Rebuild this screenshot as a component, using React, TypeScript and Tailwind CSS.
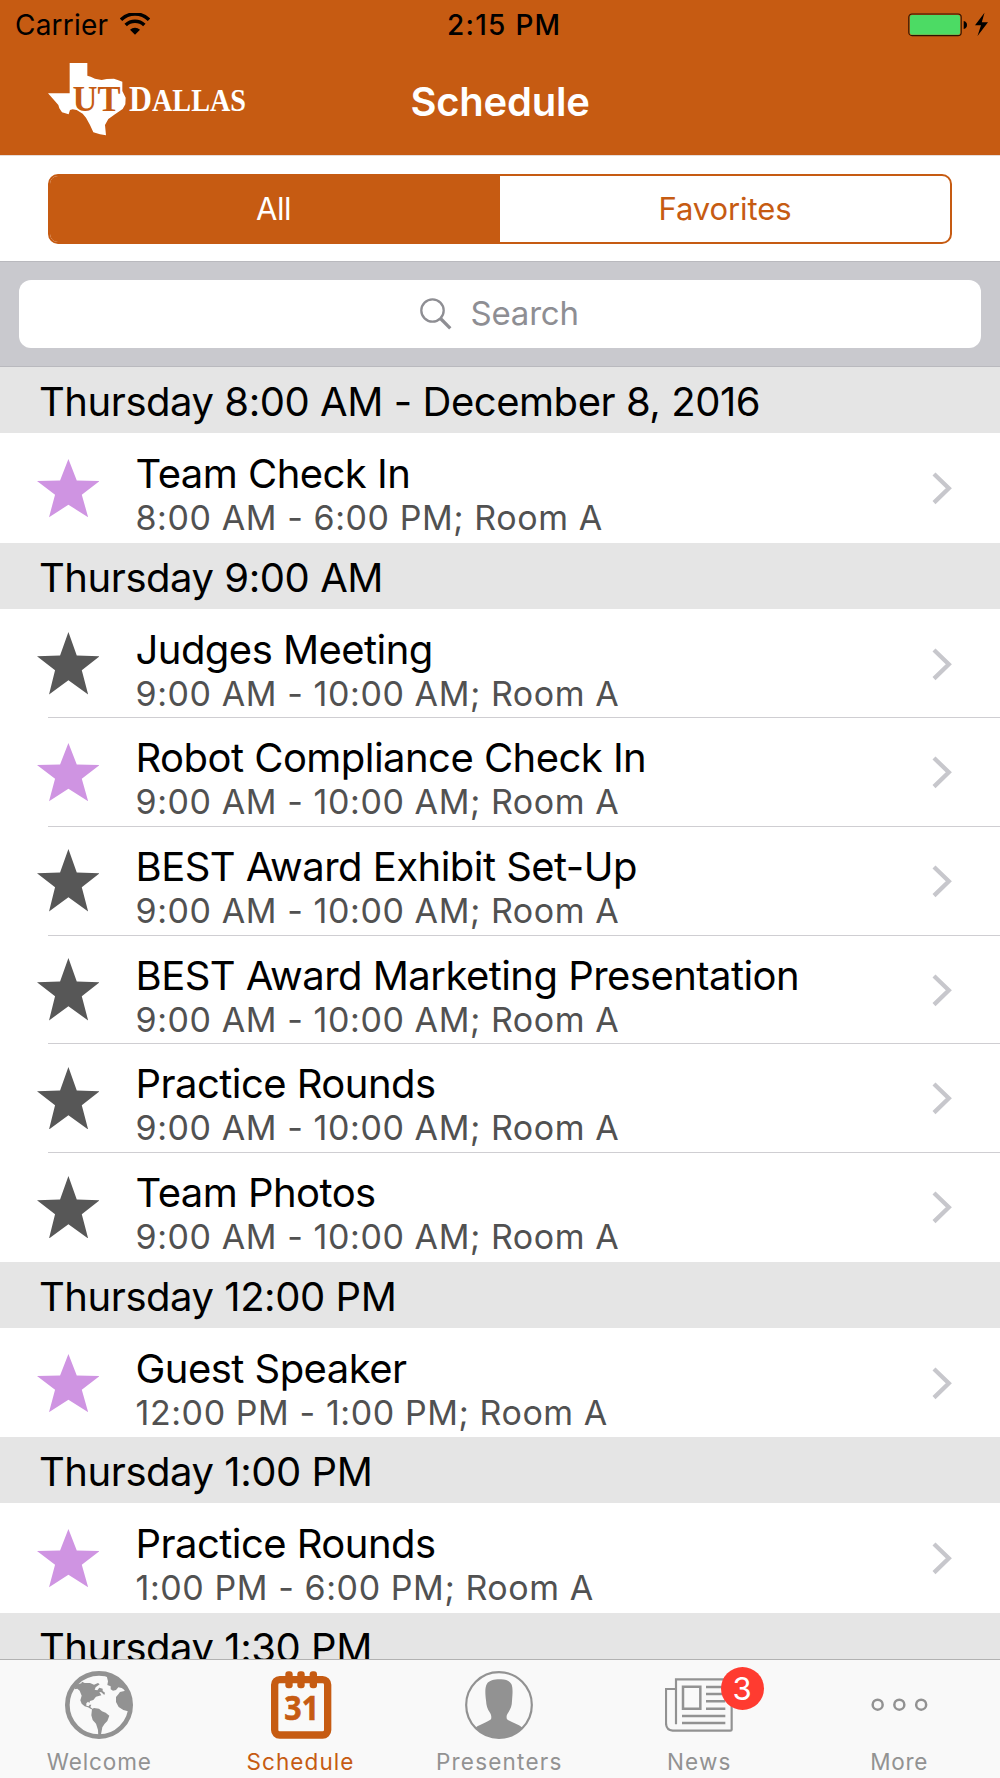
import React from "react";

type Entry = { title: string; detail: string; favorite?: boolean };
type Section = { heading: string; entries: Entry[] };

const schedule: Section[] = [
  {
    heading: "Thursday 8:00 AM - December 8, 2016",
    entries: [{ title: "Team Check In", detail: "8:00 AM - 6:00 PM; Room A", favorite: true }],
  },
  {
    heading: "Thursday 9:00 AM",
    entries: [
      { title: "Judges Meeting", detail: "9:00 AM - 10:00 AM; Room A" },
      { title: "Robot Compliance Check In", detail: "9:00 AM - 10:00 AM; Room A", favorite: true },
      { title: "BEST Award Exhibit Set-Up", detail: "9:00 AM - 10:00 AM; Room A" },
      { title: "BEST Award Marketing Presentation", detail: "9:00 AM - 10:00 AM; Room A" },
      { title: "Practice Rounds", detail: "9:00 AM - 10:00 AM; Room A" },
      { title: "Team Photos", detail: "9:00 AM - 10:00 AM; Room A" },
    ],
  },
  {
    heading: "Thursday 12:00 PM",
    entries: [{ title: "Guest Speaker", detail: "12:00 PM - 1:00 PM; Room A", favorite: true }],
  },
  {
    heading: "Thursday 1:00 PM",
    entries: [{ title: "Practice Rounds", detail: "1:00 PM - 6:00 PM; Room A", favorite: true }],
  },
  { heading: "Thursday 1:30 PM", entries: [] },
];

function WifiIcon() {
  return (
    <svg className="mt-[13px] ml-[12px] h-[22px] w-[30px]" viewBox="0 0 90 66" fill="none" stroke="#000">
      <path d="M3 20 A60 60 0 0 1 87 20" strokeWidth="10.500" />
      <path d="M17 36 A40 40 0 0 1 73 36" strokeWidth="10.500" />
      <path d="M45 65 L30 50 A22 22 0 0 1 60 50 Z" fill="#000" stroke="none" />
    </svg>
  );
}

function Logo() {
  return (
    <svg className="mt-[62px] ml-[48px] h-[74px] w-[204px]" viewBox="48 62 204 74">
      <g transform="translate(40 55) scale(.33333)">
        <path
          fill="#fff"
          d="M89 24H142V62L152 65L165 71L185 75L200 72L222 71L235 76L247 80V108L257 128L256 148L248 162L225 178L205 192L195 210L198 241L180 238L160 232L150 210L138 188L128 176L110 165L98 163L90 165L86 178L66 172L58 160L55 150L40 133L24 115H89Z"
        />
      </g>
      <g fontFamily="'Liberation Serif', serif" fontWeight="700">
        <text
          x="72.500"
          y="110.500"
          fontSize="35.500"
          textLength="48"
          lengthAdjust="spacingAndGlyphs"
          fill="#c65b12"
          stroke="#fff"
          strokeWidth="2"
          paintOrder="stroke"
        >
          UT
        </text>
        <text x="129" y="110.500" fontSize="36" textLength="23" lengthAdjust="spacingAndGlyphs" fill="#fff">
          D
        </text>
        <text x="152" y="110.500" fontSize="32" textLength="94" lengthAdjust="spacingAndGlyphs" fill="#fff">
          ALLAS
        </text>
      </g>
    </svg>
  );
}

function Battery() {
  return (
    <svg className="absolute top-[12px] right-[10px] h-[26px] w-[82px]" viewBox="0 0 82 26">
      <rect x=".8" y="2" width="52.4" height="21.6" rx="3.2" fill="#c65b12" stroke="#2c1202" strokeWidth="1.1" />
      <rect x="1.9" y="3.1" width="50.2" height="19.6" rx="2" fill="#4cdb64" />
      <path d="M55.7 9C58 9.4 59 11 59 13S58 16.600 55.7 17Z" fill="#000" />
      <path d="M76.500 .8L67 13.200H73L69.500 24L80 10.200H73.800Z" fill="#000" />
    </svg>
  );
}

function Star({ favorite }: { favorite?: boolean }) {
  return favorite ? (
    <svg
      className="mt-[26px] ml-[36.500px] h-[58.500px] w-[62.500px] shrink-0 blur-[0.7px]"
      viewBox="0 0 187 175"
      preserveAspectRatio="none"
    >
      <path fill="#cf94e2" d="M94 0L119 64L187 66L134 107L153 174L94 137L36 174L54 107L0 66L69 64Z" />
    </svg>
  ) : (
    <svg
      className="mt-[23.500px] ml-[36.500px] h-[62.500px] w-[62.500px] shrink-0"
      viewBox="0 0 187 188"
      preserveAspectRatio="none"
    >
      <path fill="#575757" d="M94 0L119 71L187 73L134 115L153 188L94 145L36 188L54 115L0 73L69 71Z" />
    </svg>
  );
}

function Chevron() {
  return (
    <svg className="mt-[39px] mr-[48px] ml-auto h-[33px] w-[20px] shrink-0" viewBox="0 0 20 33" fill="none">
      <path d="M2 2L16.800 16.300L2 30.600" stroke="#c7c7cc" strokeWidth="4.300" />
    </svg>
  );
}

function Row({ entry, last }: { entry: Entry; last: boolean }) {
  return (
    <div className={last ? "relative flex h-[109.600px]" : "relative flex h-[108.700px]"}>
      <Star favorite={entry.favorite} />
      <div className="ml-[36.500px] pt-[17px] whitespace-nowrap">
        <div className="text-[40px] leading-[48px] tracking-[-0.540px] text-black">{entry.title}</div>
        <div className="text-[34px] leading-[40px] tracking-[0.580px] text-[#515151]">{entry.detail}</div>
      </div>
      <Chevron />
      {!last && <div className="absolute right-0 -bottom-px left-[48px] h-px bg-[#cfced2]" />}
    </div>
  );
}

function GlobeIcon() {
  return (
    <svg className="h-[68px] w-[68px]" viewBox="33 35 204 204">
      <circle cx="135" cy="137" r="95" fill="none" stroke="#929292" strokeWidth="14" />
      <g fill="#929292">
        <path d="M62 90L66 76L82 72L84 67L92 71L108 71L120 76L132 71L137 75L125 84L122 91L130 93L136 85L146 88V95L153 100L151 107L142 99L136 98L142 108L126 112L118 122L108 125L106 131L102 127L97 132V139L104 141L107 136H112L109 143L116 149L112 150L102 144L92 141L83 133L79 123L83 109L77 94L70 88Z" />
        <path d="M114 149L120 146L135 148L144 156L155 160L166 169L160 185L152 193L145 204L139 236H133L132 212L126 193L116 182L112 168Z" />
        <path d="M158 50L164 47L190 58L206 76L212 92L203 86L193 84L186 92L177 94L170 90L170 81L160 77L162 66Z" />
        <path d="M211 95L220 94L232 120L232 150L222 156L208 152L194 143L186 128L186 113L193 105L198 98Z" />
      </g>
    </svg>
  );
}

function CalendarIcon() {
  return (
    <svg className="h-[68px] w-[62px]" viewBox="810 214 184 204">
      <rect x="823" y="240" width="159" height="166" rx="15" fill="none" stroke="#c65b12" strokeWidth="22" />
      <g fill="#c65b12">
        <rect x="855" y="215" width="22" height="51" rx="9" />
        <rect x="891" y="215" width="22" height="51" rx="9" />
        <rect x="928" y="215" width="22" height="51" rx="9" />
      </g>
      <text
        x="852"
        y="362"
        fontFamily="'Open Sans', sans-serif"
        fontWeight="700"
        fontSize="103"
        textLength="104"
        lengthAdjust="spacingAndGlyphs"
        fill="#c65b12"
        stroke="#c65b12"
        strokeWidth="2"
      >
        31
      </text>
    </svg>
  );
}

function PersonIcon() {
  return (
    <svg className="h-[68px] w-[68px]" viewBox="345 214 204 204">
      <circle cx="447" cy="316" r="98.500" fill="none" stroke="#929292" strokeWidth="6.500" />
      <path
        fill="#929292"
        d="M376 384C392 373 412 368 423 359C425 352 424 346 419 338C412 328 409 318 408 302C405 278 405 262 411 252C417 243 432 239 449 239C466 238 478 243 484 253C489 264 488 280 486 304C486 318 482 328 474 340C469 347 469 353 471 359C484 369 503 372 518 384A100 100 0 0 1 376 384Z"
      />
    </svg>
  );
}

function NewsIcon() {
  return (
    <svg className="h-[68px] w-[68px]" viewBox="75 214 204 204" fill="none" stroke="#929292">
      <path strokeWidth="6.500" d="M108 374V239H275V390Q275 393 271 393H98Q78 391 78 370V268H108" />
      <path strokeWidth="7.500" d="M129 261H181V327H129Z" />
      <path strokeWidth="7.500" d="M198 262H256M198 283H256M198 305H256M198 327H256M126 349H256M126 370H256" />
    </svg>
  );
}

function MoreIcon() {
  return (
    <svg className="h-[68px] w-[68px]" viewBox="672 214 204 204" fill="none" stroke="#929292" strokeWidth="7.500">
      <circle cx="710" cy="315" r="15" />
      <circle cx="775" cy="315" r="15" />
      <circle cx="840.500" cy="315" r="15" />
    </svg>
  );
}

const tabs = [
  { label: "Welcome", icon: <GlobeIcon />, spacing: "tracking-[0.900px]" },
  { label: "Schedule", icon: <CalendarIcon />, spacing: "tracking-[1.100px]", active: true },
  { label: "Presenters", icon: <PersonIcon />, spacing: "tracking-[1.200px]" },
  { label: "News", icon: <NewsIcon />, spacing: "tracking-[1.100px]", badge: "3" },
  { label: "More", icon: <MoreIcon />, spacing: "tracking-[0.700px]" },
];

export default function App() {
  return (
    <div className="flex h-[1778px] w-[1000px] flex-col overflow-hidden bg-white font-[Inter,sans-serif]">
      <header className="relative h-[156px] shrink-0 border-b border-[#e6dcd8] bg-[#c65b12]">
        <div className="absolute inset-x-0 top-0 flex text-[28px] leading-[51px] text-black">
          <span className="ml-[15px] tracking-[0.200px]">Carrier</span>
          <WifiIcon />
          <span className="absolute left-[447px] font-medium tracking-[1.250px]">2:15 PM</span>
          <Battery />
        </div>
        <div className="flex">
          <Logo />
          <h1 className="ml-[158.500px] pt-[78px] text-[40px] leading-[48px] font-semibold tracking-[-0.250px] text-white">
            Schedule
          </h1>
        </div>
      </header>

      <div className="h-[105px] shrink-0 px-[48px] pt-[18px]">
        <div className="flex h-[70px] overflow-hidden rounded-[10px] border-2 border-[#c65b12] text-center text-[31px] leading-[66px]">
          <div className="w-[450px] bg-[#c65b12] pr-[3px] tracking-[-0.400px] text-white">All</div>
          <div className="flex-1 tracking-[-0.120px] text-[#c65b12]">Favorites</div>
        </div>
      </div>

      <div className="h-[106px] shrink-0 border-y border-[#b9b9be] bg-[#c9c9ce] px-[19px] pt-[18px]">
        <div className="flex h-[68px] rounded-[12px] bg-white text-[33px] leading-[66px] text-[#8e8e93]">
          <svg className="mt-[18px] ml-[400px] h-[34px] w-[34px]" viewBox="0 0 34 34" fill="none" stroke="#8e8e93">
            <circle cx="13.500" cy="12.500" r="11.200" strokeWidth="2.300" />
            <path d="M21.500 20.500L31.300 30.300" strokeWidth="3.300" />
          </svg>
          <span className="ml-[17.500px] tracking-[-0.200px]">Search</span>
        </div>
      </div>

      <main className="min-h-0 flex-1 overflow-hidden">
        {schedule.map((section) => (
          <section key={section.heading}>
            <h2 className="h-[66px] bg-[#e5e5e5] pl-[39px] text-[40px] leading-[69.500px] tracking-[-0.450px] whitespace-nowrap text-black">
              {section.heading}
            </h2>
            {section.entries.map((entry, i) => (
              <Row key={entry.title} entry={entry} last={i === section.entries.length - 1} />
            ))}
          </section>
        ))}
      </main>

      <nav className="z-10 grid h-[119px] w-[1000px] shrink-0 grid-cols-5 border-t border-[#b2b2b2] bg-[#f9f9f9]">
        {tabs.map((tab) => (
          <div
            key={tab.label}
            className={
              tab.active
                ? "relative flex flex-col items-center pt-[11px] pl-[1px] text-[#c65b12]"
                : "relative flex flex-col items-center pt-[11px] pr-[1.500px] text-[#929292]"
            }
          >
            {tab.icon}
            <span className={`mt-[8.500px] text-[22.500px] leading-[28px] ${tab.spacing}`}>{tab.label}</span>
            {tab.badge && (
              <span className="absolute top-[7px] left-[120.500px] h-[43px] w-[43px] rounded-full bg-[#ff3b30] text-center text-[31px] leading-[43px] text-white">
                {tab.badge}
              </span>
            )}
          </div>
        ))}
      </nav>
    </div>
  );
}
